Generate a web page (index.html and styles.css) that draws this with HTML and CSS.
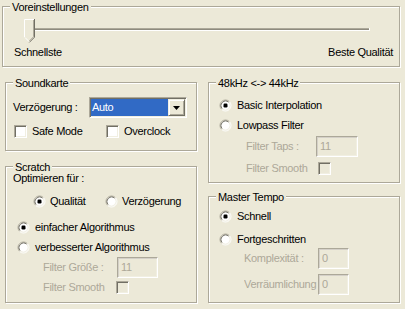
FILE: index.html
```html
<!DOCTYPE html>
<html>
<head>
<meta charset="utf-8">
<title>Einstellungen</title>
<link rel="stylesheet" href="styles.css">
</head>
<body>
<svg class="defs" width="0" height="0" aria-hidden="true">
  <symbol id="radio" viewBox="0 0 13 13">
    <circle cx="6.5" cy="6.5" r="5" fill="#fff"/>
    <path d="M2.61 10.39A5.5 5.5 0 0 1 10.39 2.61" fill="none" stroke="#ACA899"/>
    <path d="M3.32 9.68A4.5 4.5 0 0 1 9.68 3.32" fill="none" stroke="#716F64"/>
    <path d="M10.39 2.61A5.5 5.5 0 0 1 2.61 10.39" fill="none" stroke="#fff"/>
    <path d="M9.68 3.32A4.5 4.5 0 0 1 3.32 9.68" fill="none" stroke="#F1EFE2"/>
  </symbol>
  <symbol id="radio-on" viewBox="0 0 13 13">
    <use href="#radio"/>
    <rect x="4.5" y="4.5" width="4" height="4" rx="1.2" fill="#000"/>
  </symbol>
</svg>

<div class="page">
  <section class="group g-preset">
    <span class="legend">Voreinstellungen</span>
    <div class="slider">
      <div class="track"></div>
      <svg class="thumb" width="11" height="24" viewBox="0 0 11 24">
        <path d="M0.5 0.5H10.5V18L5.5 23L0.5 18Z" fill="#ECE9D8"/>
        <path d="M0.5 18V0.5H10" fill="none" stroke="#fff"/>
        <path d="M10.5 0V18.2L5.3 23.4" fill="none" stroke="#716F64"/>
        <path d="M9.5 1V17.8L5.3 22" fill="none" stroke="#ACA899"/>
        <path d="M1 18.5L5 22.5" fill="none" stroke="#fff"/>
      </svg>
    </div>
    <div class="slider-labels"><span>Schnellste</span><span>Beste Qualität</span></div>
  </section>

  <div class="columns">
    <div class="col">
      <section class="group g-sound">
        <span class="legend">Soundkarte</span>
        <div class="combo-row">
          <span class="combo-label">Verzögerung :</span>
          <div class="combo">
            <span class="combo-value">Auto</span>
            <span class="combo-btn">
              <svg width="7" height="4" viewBox="0 0 7 4"><path d="M0 0H7L3.5 4Z" fill="#000"/></svg>
            </span>
          </div>
        </div>
        <div class="check-row">
          <label class="check-item w92"><span class="box"></span><span>Safe Mode</span></label>
          <label class="check-item"><span class="box"></span><span>Overclock</span></label>
        </div>
      </section>

      <section class="group g-scratch">
        <span class="legend">Scratch</span>
        <div class="opt-title">Optimieren für :</div>
        <div class="radio-row opt-row">
          <span class="radio-item w72"><svg class="radio"><use href="#radio-on"/></svg><span>Qualität</span></span>
          <span class="radio-item"><svg class="radio"><use href="#radio"/></svg><span>Verzögerung</span></span>
        </div>
        <div class="radio-row algo-row first">
          <span class="radio-item"><svg class="radio"><use href="#radio-on"/></svg><span>einfacher Algorithmus</span></span>
        </div>
        <div class="radio-row algo-row second">
          <span class="radio-item"><svg class="radio"><use href="#radio"/></svg><span>verbesserter Algorithmus</span></span>
        </div>
        <div class="field-row s-size">
          <span class="dis-label w74">Filter Größe :</span>
          <span class="dis-input w41">11</span>
        </div>
        <div class="field-row s-smooth">
          <span class="dis-label w73">Filter Smooth</span>
          <span class="box disabled"></span>
        </div>
      </section>
    </div>

    <div class="col">
      <section class="group g-rate">
        <span class="legend">48kHz &lt;-&gt; 44kHz</span>
        <div class="radio-row r-first">
          <span class="radio-item"><svg class="radio"><use href="#radio-on"/></svg><span>Basic Interpolation</span></span>
        </div>
        <div class="radio-row r-second">
          <span class="radio-item"><svg class="radio"><use href="#radio"/></svg><span>Lowpass Filter</span></span>
        </div>
        <div class="field-row r-taps">
          <span class="dis-label w70">Filter Taps :</span>
          <span class="dis-input w42">11</span>
        </div>
        <div class="field-row r-smooth">
          <span class="dis-label w72">Filter Smooth</span>
          <span class="box disabled"></span>
        </div>
      </section>

      <section class="group g-tempo">
        <span class="legend">Master Tempo</span>
        <div class="radio-row t-first">
          <span class="radio-item"><svg class="radio"><use href="#radio-on"/></svg><span>Schnell</span></span>
        </div>
        <div class="radio-row t-second">
          <span class="radio-item"><svg class="radio"><use href="#radio"/></svg><span>Fortgeschritten</span></span>
        </div>
        <div class="field-row t-complex">
          <span class="dis-label w74">Komplexität :</span>
          <span class="dis-input w31">0</span>
        </div>
        <div class="field-row t-space">
          <span class="dis-label w74">Verräumlichung</span>
          <span class="dis-input w31">0</span>
        </div>
      </section>
    </div>
  </div>
</div>
</body>
</html>
```

FILE: styles.css
```css
* { box-sizing: border-box; }
html, body { margin: 0; padding: 0; }
body {
  width: 405px;
  height: 309px;
  overflow: hidden;
  background: #ECE9D8;
  color: #000;
  font-family: "Liberation Sans", Arial, sans-serif;
  font-size: 11px;
  letter-spacing: -0.3px;
  line-height: 13px;
}
.defs { position: absolute; width: 0; height: 0; overflow: hidden; }

.page { padding-top: 6px; }

.group {
  position: relative;
  border: 1px solid #ACA899;
  box-shadow: inset 1px 1px #fff, 1px 1px #fff;
}
.legend {
  position: absolute;
  top: -6px;
  left: 7px;
  padding: 0 2px;
  background: #ECE9D8;
  white-space: nowrap;
}

/* Voreinstellungen */
.g-preset {
  margin-left: 2px;
  width: 398px;
  height: 61px;
  padding: 12px 6px 0 11px;
}
.slider {
  position: relative;
  height: 24px;
  padding-top: 9px;
  margin: 0 24px 0 10px;
}
.track {
  height: 3px;
  border-top: 1px solid #ACA899;
  border-bottom: 1px solid #fff;
  background: #8E8B7E;
  box-shadow: 1px 0 #fff;
}
.thumb { position: absolute; left: 0; top: 0; }
.slider-labels {
  display: flex;
  justify-content: space-between;
  margin-top: 3px;
}

/* columns */
.columns {
  display: grid;
  grid-template-columns: 192px 192px;
  column-gap: 11px;
  margin: 15px 0 0 5px;
}
.col { display: flex; flex-direction: column; }

/* Soundkarte */
.g-sound { height: 69px; }
.combo-row {
  display: flex;
  align-items: center;
  height: 21px;
  margin-top: 14px;
  padding-left: 7px;
}
.combo-label { width: 76px; }
.combo {
  display: flex;
  width: 98px;
  height: 21px;
  border: 1px solid;
  border-color: #ACA899 #fff #fff #ACA899;
  box-shadow: inset 1px 1px #716F64, inset -1px -1px #F1EFE2;
  padding: 1px;
  background: #fff;
}
.combo-value {
  flex: 1;
  background: #316AC5;
  color: #fff;
  padding-left: 1px;
  line-height: 17px;
}
.combo-btn {
  width: 17px;
  display: flex;
  align-items: center;
  justify-content: center;
  background: #ECE9D8;
  border: 1px solid;
  border-color: #F1EFE2 #716F64 #716F64 #F1EFE2;
  box-shadow: inset 1px 1px #fff, inset -1px -1px #ACA899;
}
.check-row {
  display: flex;
  margin-top: 7px;
  padding-left: 8px;
  height: 13px;
  align-items: center;
}
.check-item { display: flex; align-items: center; gap: 5px; }
.w92 { width: 92px; }

.box {
  display: block;
  width: 13px;
  height: 13px;
  flex: none;
  border: 1px solid;
  border-color: #ACA899 #fff #fff #ACA899;
  box-shadow: inset 1px 1px #716F64, inset -1px -1px #F1EFE2;
  background: #fff;
}
.box.disabled { background: #ECE9D8; }

/* radios */
.radio { width: 13px; height: 13px; flex: none; }
.radio-row { display: flex; align-items: center; height: 13px; }
.radio-item { display: flex; align-items: center; gap: 5px; }
.w72 { width: 72px; }

/* Scratch */
.g-scratch { height: 137px; margin-top: 15px; }
.opt-title { padding-top: 5px; margin-left: 7px; }
.opt-row { margin-top: 10px; padding-left: 27px; }
.opt-row .radio-item { gap: 4px; }
.algo-row { padding-left: 11px; }
.algo-row .radio-item { gap: 5px; }
.algo-row.first { margin-top: 13px; }
.algo-row.second { margin-top: 7px; }

.field-row { display: flex; align-items: center; }
.dis-label {
  color: #ACA899;
  white-space: nowrap;
  overflow: hidden;
}
.dis-input {
  height: 21px;
  border: 1px solid;
  border-color: #ACA899 #fff #fff #ACA899;
  box-shadow: inset 1px 1px #D4D0C8, inset -1px -1px #F1EFE2;
  background: #ECE9D8;
  color: #ACA899;
  padding-left: 3px;
  line-height: 19px;
}
.w70 { width: 70px; }
.w73 { width: 73px; }
.w74 { width: 74px; }
.w31 { width: 31px; }
.w41 { width: 41px; }
.w42 { width: 42px; }

.s-size { margin-top: 3px; padding-left: 37px; }
.s-smooth { margin-top: 3px; padding-left: 37px; height: 13px; }

/* 48kHz */
.g-rate { height: 101px; }
.r-first { margin-top: 16px; padding-left: 10px; }
.r-second { margin-top: 7px; padding-left: 10px; }
.r-taps { margin-top: 4px; padding-left: 37px; }
.r-smooth { margin-top: 5px; padding-left: 37px; height: 13px; }

/* Master Tempo */
.g-tempo { height: 107px; margin-top: 13px; }
.t-first { margin-top: 13px; padding-left: 10px; }
.t-second { margin-top: 10px; padding-left: 10px; }
.t-complex { margin-top: 2px; padding-left: 35px; }
.t-space { margin-top: 5px; padding-left: 35px; }
```
